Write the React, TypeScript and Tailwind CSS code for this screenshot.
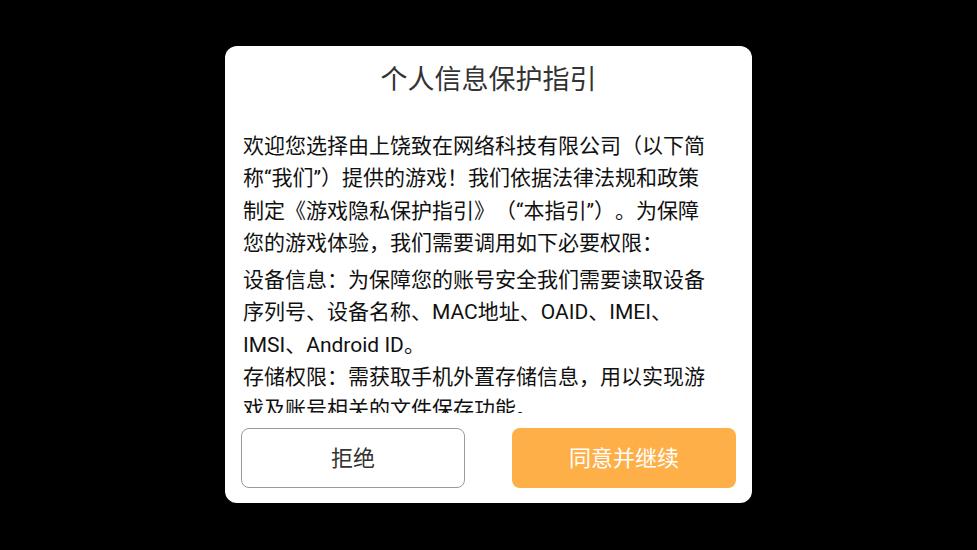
import React from "react";

const font = { fontFamily: 'Roboto, "Noto Sans CJK SC", sans-serif' };

const para1 = [
  "欢迎您选择由上饶致在网络科技有限公司（以下简",
  "称“我们”）提供的游戏！我们依据法律法规和政策",
  "制定《游戏隐私保护指引》（“本指引”）。为保障",
  "您的游戏体验，我们需要调用如下必要权限：",
];
const para2 = [
  "设备信息：为保障您的账号安全我们需要读取设备",
  "序列号、设备名称、MAC地址、OAID、IMEI、",
  "IMSI、Android ID。",
  "存储权限：需获取手机外置存储信息，用以实现游",
  "戏及账号相关的文件保存功能。",
];

export default function App() {
  return (
    <div
      className="w-[977px] h-[550px] bg-black flex items-start justify-center pt-[46px] [text-spacing-trim:space-all]"
      style={font}
    >
      <div className="w-[527px] h-[457px] bg-white rounded-[12px] flex flex-col pt-[16px] pb-[15px]">
        <div className="h-[36px] leading-[36px] text-[27px] text-[#333333] text-center">
          个人信息保护指引
        </div>
        <div className="mt-[32px] h-[283px] overflow-hidden pl-[18px] pr-[16px] text-[21px] leading-[32.3px] text-[#111111]">
          <div>
            {para1.map((l, i) => (
              <div key={i} className="whitespace-nowrap">
                {l}
              </div>
            ))}
          </div>
          <div className="mt-[5px]">
            {para2.map((l, i) => (
              <div key={i} className="whitespace-nowrap">
                {l}
              </div>
            ))}
          </div>
        </div>
        <div className="mt-[15px] flex justify-between pl-[16px] pr-[16px]">
          <button className="w-[224px] h-[60px] rounded-[8px] border border-[#9a9a9a] bg-white text-[22px] text-[#333333]">
            拒绝
          </button>
          <button className="w-[224px] h-[60px] rounded-[8px] bg-[#ffaf47] text-[22px] text-white">
            同意并继续
          </button>
        </div>
      </div>
    </div>
  );
}
